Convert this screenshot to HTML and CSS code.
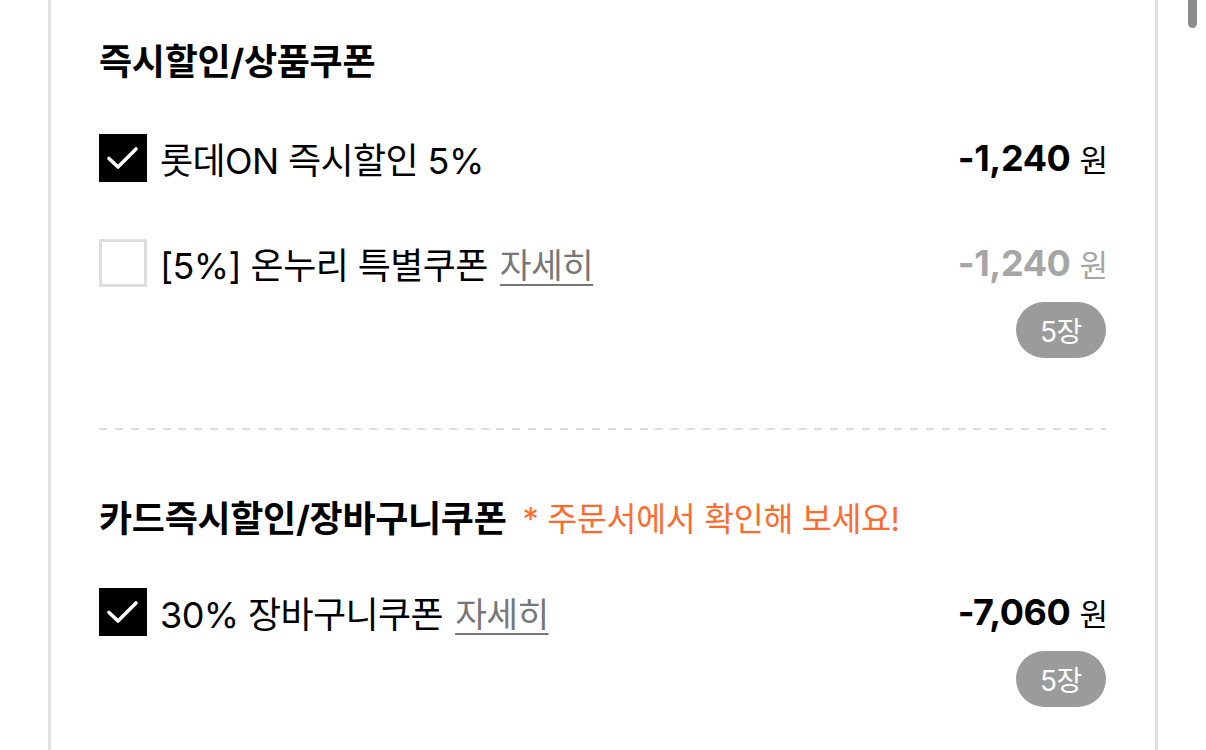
FILE: index.html
```html
<!DOCTYPE html>
<html lang="ko">
<head>
<meta charset="utf-8">
<title>할인/쿠폰</title>
<link rel="stylesheet" href="styles.css">
</head>
<body>
<div class="scroll-thumb"></div>
<main class="panel">
  <section class="section">
    <h2 class="section-title">즉시할인/상품쿠폰</h2>
    <ul class="coupon-list">
      <li class="coupon">
        <div class="coupon-left">
          <span class="check is-checked">
            <svg viewBox="0 0 48 48" width="48" height="48"><path d="M10 24.5 L19 33 L37 15" fill="none" stroke="#fff" stroke-width="3.6" stroke-linecap="round" stroke-linejoin="round"/></svg>
          </span>
          <span class="coupon-name">롯데ON 즉시할인 5%</span>
        </div>
        <div class="coupon-right">
          <div class="price"><strong class="amount">-1,240</strong><span class="unit">원</span></div>
        </div>
      </li>
      <li class="coupon">
        <div class="coupon-left">
          <span class="check"></span>
          <span class="coupon-name">[5%] 온누리 특별쿠폰</span>
          <a class="detail-link">자세히</a>
        </div>
        <div class="coupon-right">
          <div class="price is-disabled"><strong class="amount">-1,240</strong><span class="unit">원</span></div>
          <span class="count-badge">5장</span>
        </div>
      </li>
    </ul>
  </section>

  <div class="divider"></div>

  <section class="section">
    <h2 class="section-title">카드즉시할인/장바구니쿠폰 <span class="title-note">* 주문서에서 확인해 보세요!</span></h2>
    <ul class="coupon-list">
      <li class="coupon">
        <div class="coupon-left">
          <span class="check is-checked">
            <svg viewBox="0 0 48 48" width="48" height="48"><path d="M10 24.5 L19 33 L37 15" fill="none" stroke="#fff" stroke-width="3.6" stroke-linecap="round" stroke-linejoin="round"/></svg>
          </span>
          <span class="coupon-name">30% 장바구니쿠폰</span>
          <a class="detail-link">자세히</a>
        </div>
        <div class="coupon-right">
          <div class="price"><strong class="amount">-7,060</strong><span class="unit">원</span></div>
          <span class="count-badge">5장</span>
        </div>
      </li>
    </ul>
  </section>
</main>
</body>
</html>
```
FILE: styles.css
```css
html, body {
  margin: 0;
  padding: 0;
  background: #fff;
}

body {
  font-family: "Inter", "Noto Sans CJK KR", sans-serif;
  color: #000;
  overflow: hidden;
}

.scroll-thumb {
  position: fixed;
  top: -10px;
  left: 1188px;
  width: 9px;
  height: 38px;
  border-radius: 5px;
  background: #8c8c8c;
}

.panel {
  box-sizing: border-box;
  width: 1110px;
  min-height: 100vh;
  margin-left: 48px;
  padding: 0 49px 0 48px;
  border-left: 3px solid #e0e0e0;
  border-right: 3px solid #e0e0e0;
}

.section {
  padding: 34px 0 70px;
}

.section + .divider + .section {
  padding-top: 61px;
}

.section-title {
  margin: 0;
  height: 50px;
  display: flex;
  align-items: center;
  font-size: 36px;
  font-weight: 700;
  letter-spacing: -0.3px;
  white-space: nowrap;
}

.section:first-child .coupon-list {
  margin-top: 50px;
}

.title-note {
  margin-left: 16px;
  font-size: 32.5px;
  font-weight: 400;
  color: #ff6b2c;
  letter-spacing: -0.3px;
}

.coupon-list {
  list-style: none;
  margin: 47px 0 0;
  padding: 0;
  display: flex;
  flex-direction: column;
  gap: 57px;
}

.coupon {
  display: flex;
  justify-content: space-between;
  align-items: flex-start;
}

.coupon-left {
  display: flex;
  align-items: center;
  height: 48px;
}

.check {
  box-sizing: border-box;
  width: 48px;
  height: 48px;
  flex: none;
  border: 3px solid #dedede;
  background: #fff;
  display: flex;
}

.check.is-checked {
  border: 0;
  background: #000;
}

.coupon-name {
  margin-left: 13px;
  font-size: 36px;
  letter-spacing: -0.6px;
  white-space: nowrap;
}

.detail-link {
  margin-left: 12px;
  font-size: 34.5px;
  color: #777;
  letter-spacing: -0.6px;
  text-decoration: underline;
  text-decoration-thickness: 2px;
  text-underline-offset: 6px;
  white-space: nowrap;
}

.coupon-right {
  display: flex;
  flex-direction: column;
  align-items: flex-end;
}

.price {
  height: 48px;
  display: flex;
  align-items: center;
  white-space: nowrap;
  margin-right: -2px;
}

.amount {
  font-size: 36px;
  font-weight: 700;
  letter-spacing: -0.4px;
}

.unit {
  margin-left: 9px;
  font-size: 31px;
}

.price.is-disabled {
  color: #a6a6a6;
}

.count-badge {
  margin-top: 15px;
  width: 90px;
  height: 56px;
  border-radius: 28px;
  background: #9b9b9b;
  color: #fff;
  font-size: 28px;
  display: flex;
  align-items: center;
  justify-content: center;
  letter-spacing: -0.5px;
}

.divider {
  height: 2px;
  background: repeating-linear-gradient(90deg, #dcdcdc 0 8px, transparent 8px 15.9px);
}
```
